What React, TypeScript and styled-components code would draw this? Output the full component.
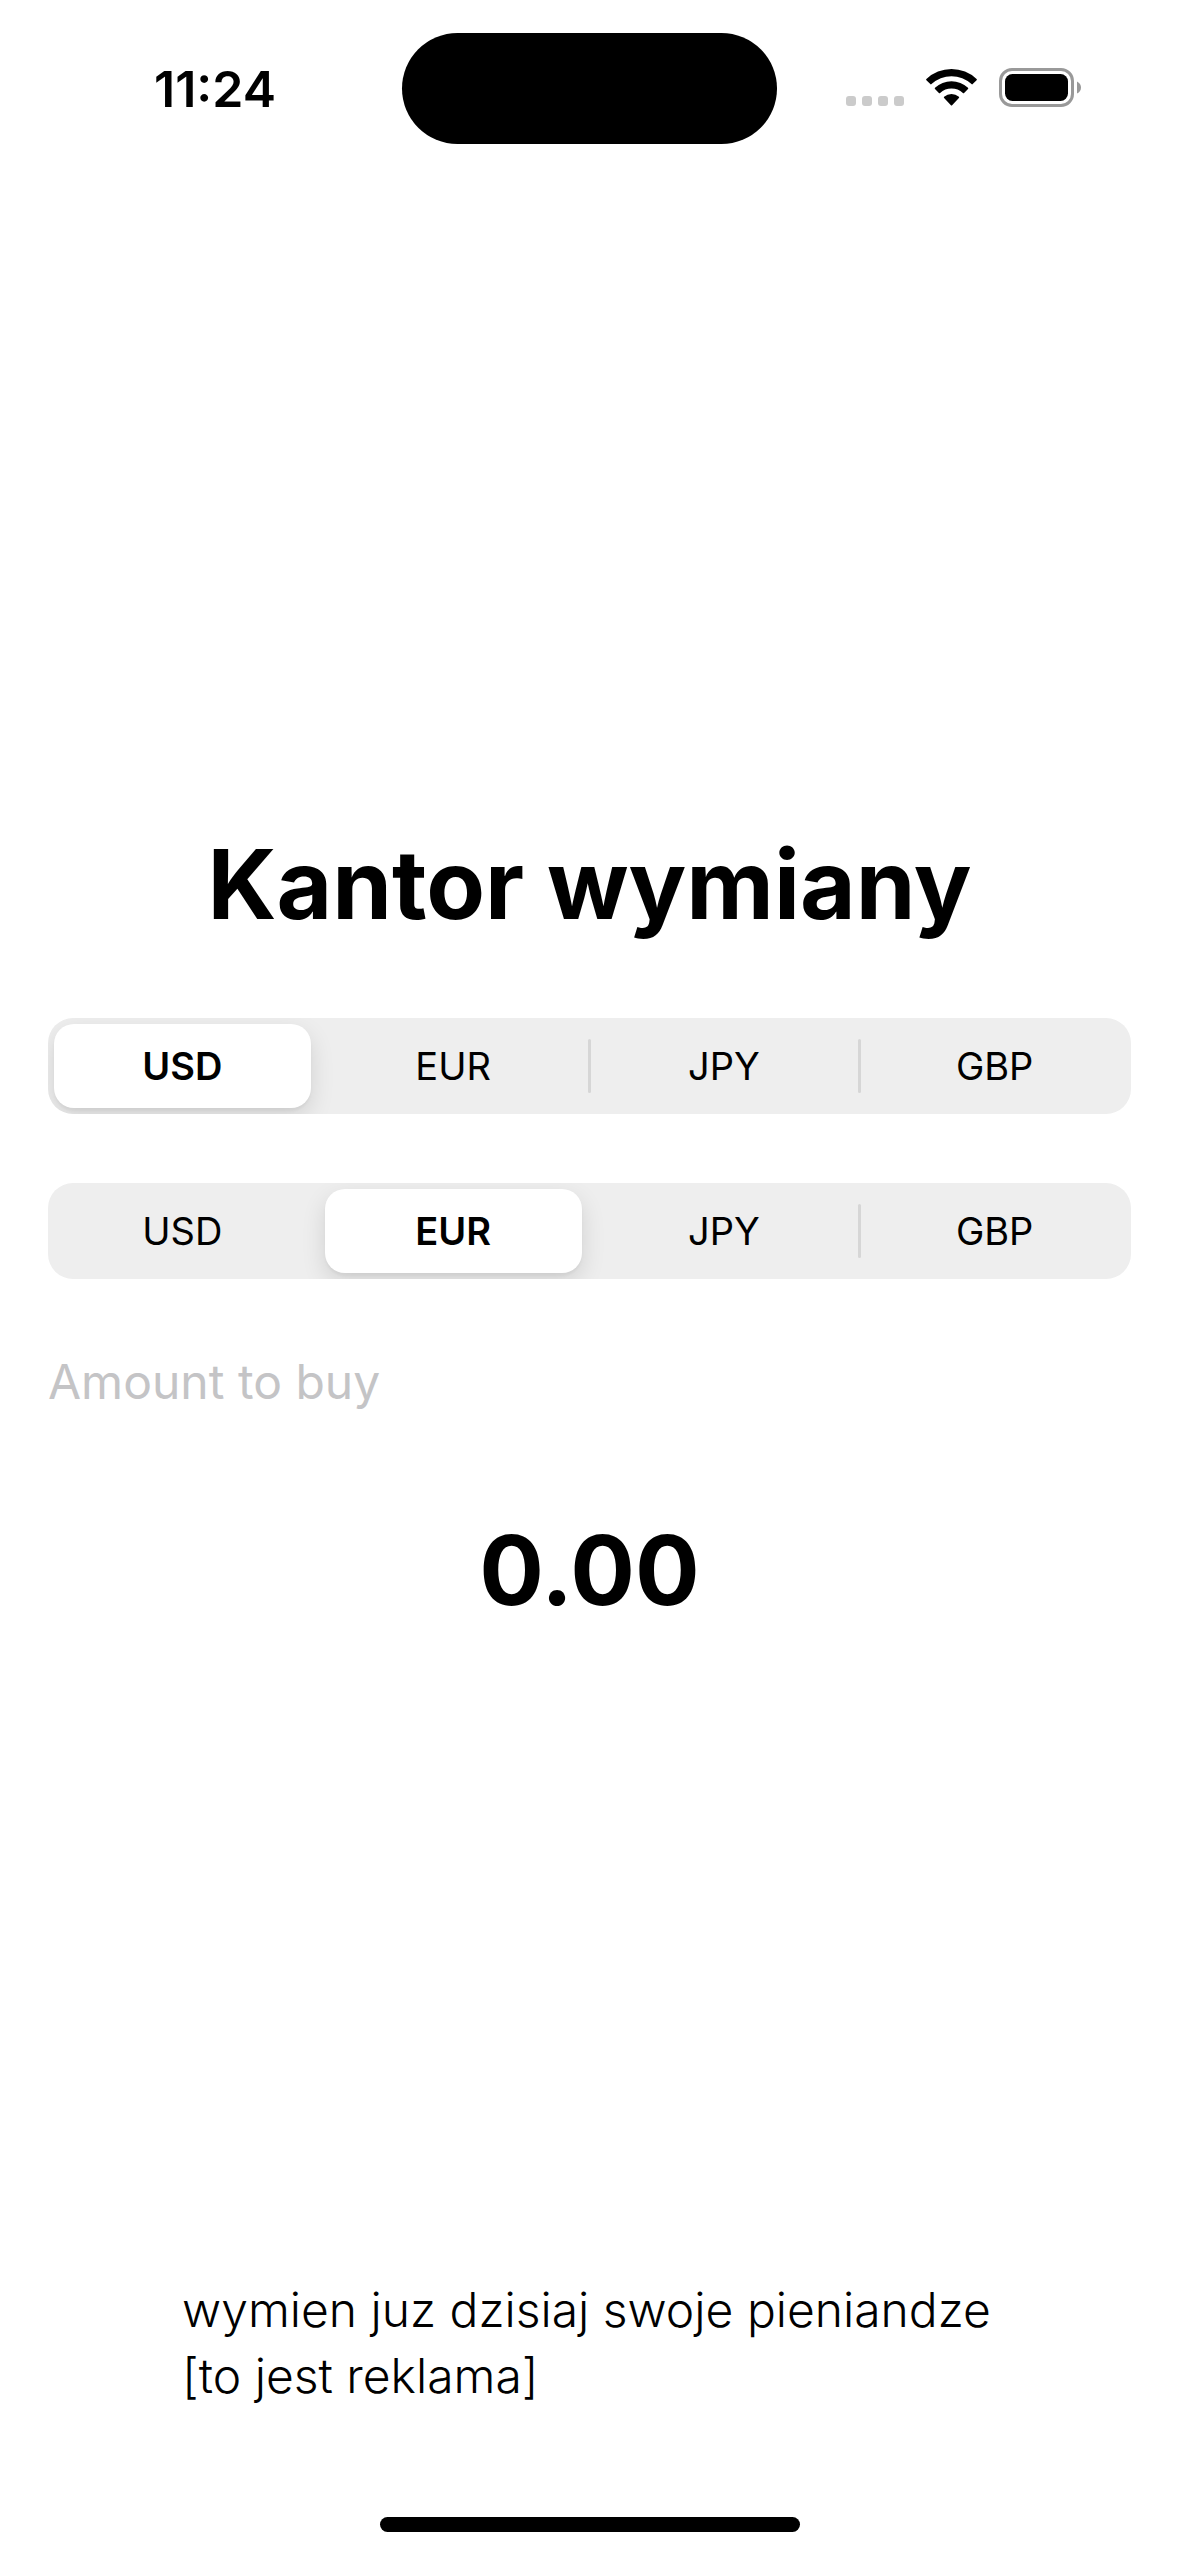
import { useState } from "react";
import styled, { createGlobalStyle } from "styled-components";

const GlobalStyle = createGlobalStyle`
  *, *::before, *::after { box-sizing: border-box; }
  body {
    margin: 0;
    background: #fff;
    color: #000;
    font-family: Inter, "Liberation Sans", sans-serif;
  }
`;

const Screen = styled.div`
  display: flex;
  flex-direction: column;
  min-height: 100vh;
`;

const StatusBar = styled.header`
  display: grid;
  grid-template-columns: 1fr 375px 1fr;
  align-items: center;
  height: 177px;
  padding: 0 28px;
`;

const Time = styled.time`
  font-size: 50px;
  line-height: 60px;
  font-weight: 600;
  text-align: center;
`;

const Island = styled.div`
  height: 111px;
  border-radius: 56px;
  background: #000;
`;

const StatusIcons = styled.svg`
  display: block;
  justify-self: center;
`;

const Exchange = styled.main`
  flex: 1;
  display: flex;
  flex-direction: column;
  justify-content: center;
  gap: 69px;
  padding: 0 48px;
`;

const Title = styled.h1`
  margin: 0;
  font-size: 96px;
  line-height: 129px;
  font-weight: 700;
  text-align: center;
`;

const Result = styled.output`
  display: block;
  font-size: 96px;
  line-height: 129px;
  font-weight: 700;
  text-align: center;
`;

const Segmented = styled.fieldset`
  display: grid;
  grid-template-columns: repeat(4, 1fr);
  height: 96px;
  margin: 0;
  padding: 0;
  border: 0;
  border-radius: 25px;
  background: #eeeeee;
  overflow: hidden;
`;

const Segment = styled.label<{ $divided: boolean }>`
  position: relative;
  display: flex;
  padding: 6px 8px 6px 6px;
  cursor: pointer;

  &::before {
    content: "";
    position: absolute;
    top: 21px;
    bottom: 21px;
    left: -2px;
    width: 3px;
    border-radius: 2px;
    background: ${(p) => (p.$divided ? "#d6d6d6" : "transparent")};
  }
`;

const SegmentInput = styled.input`
  position: absolute;
  inset: 0;
  margin: 0;
  opacity: 0;
  cursor: pointer;
`;

const SegmentFace = styled.span<{ $selected: boolean }>`
  flex: 1;
  display: flex;
  align-items: center;
  justify-content: center;
  border-radius: 20px;
  font-size: 38px;
  line-height: 48px;
  font-weight: ${(p) => (p.$selected ? 600 : 400)};
  background: ${(p) => (p.$selected ? "#fff" : "transparent")};
  box-shadow: ${(p) => (p.$selected ? "0 9px 24px rgba(0, 0, 0, 0.12), 0 3px 3px rgba(0, 0, 0, 0.04)" : "none")};
`;

const AmountField = styled.input`
  width: 100%;
  height: 89px;
  padding: 0 0 21px;
  border: 0;
  outline: 0;
  background: transparent;
  color: #000;
  font-family: inherit;
  font-size: 48px;
  line-height: 68px;

  &::placeholder {
    color: #c4c4c6;
    opacity: 1;
  }
`;

const Footer = styled.footer`
  display: flex;
  flex-direction: column;
  align-items: center;
  gap: 108px;
  padding-bottom: 24px;
`;

const Advert = styled.p`
  margin: 0;
  padding-right: 6px;
  font-size: 48px;
  line-height: 66px;
  font-weight: 300;
`;

const HomeIndicator = styled.div`
  width: 420px;
  height: 15px;
  border-radius: 8px;
  background: #000;
`;

const currencies = ["USD", "EUR", "JPY", "GBP"];

type PickerProps = {
  name: string;
  label: string;
  value: number;
  onChange: (index: number) => void;
};

function CurrencyPicker({ name, label, value, onChange }: PickerProps) {
  return (
    <Segmented aria-label={label}>
      {currencies.map((code, i) => {
        const selected = i === value;
        const divided = i > 0 && !selected && i - 1 !== value;
        return (
          <Segment key={code} $divided={divided}>
            <SegmentInput type="radio" name={name} checked={selected} onChange={() => onChange(i)} />
            <SegmentFace $selected={selected}>{code}</SegmentFace>
          </Segment>
        );
      })}
    </Segmented>
  );
}

function DeviceStatus() {
  return (
    <StatusIcons width="236" height="41" viewBox="0 0 236 41" aria-hidden="true">
      <g fill="#cbcbcb">
        <rect x="0" y="28" width="10" height="10" rx="3" />
        <rect x="16" y="28" width="10" height="10" rx="3" />
        <rect x="32" y="28" width="10" height="10" rx="3" />
        <rect x="48" y="28" width="10" height="10" rx="3" />
      </g>
      <path d="M80.4 11a36.500 36.500 0 0 1 50.200 0q.6.600 0 1.200l-3.900 3.900q-.6.600-1.200 0a29.200 29.200 0 0 0-40 0q-.6.600-1.200 0l-3.900-3.900q-.6-.6 0-1.200z" />
      <path d="M89 19.800a24 24 0 0 1 33 0q.6.600 0 1.200l-3.900 3.900q-.6.600-1.200 0a16.800 16.800 0 0 0-22.800 0q-.6.600-1.200 0l-3.900-3.900q-.6-.6 0-1.200z" />
      <path d="M98.100 28.700a11.400 11.400 0 0 1 14.800 0q.6.600 0 1.200l-6.800 7.300q-.6.600-1.200 0l-6.800-7.300q-.6-.6 0-1.200z" />
      <rect x="154.500" y="1.500" width="72" height="36" rx="11.500" fill="none" stroke="#999" strokeWidth="3" />
      <rect x="159" y="6" width="63" height="27" rx="7.500" />
      <path d="M231 13.500q4 2 4 6t-4 6z" fill="#999" />
    </StatusIcons>
  );
}

export default function App() {
  const [from, setFrom] = useState(0);
  const [to, setTo] = useState(1);
  const [amount, setAmount] = useState("");
  const perDollar = [1, 0.92, 150, 0.79];
  const result = ((Number(amount) || 0) * perDollar[to]) / perDollar[from];

  return (
    <>
      <GlobalStyle />
      <Screen>
        <StatusBar>
          <Time>11:24</Time>
          <Island />
          <DeviceStatus />
        </StatusBar>
        <Exchange>
          <Title>Kantor wymiany</Title>
          <CurrencyPicker name="from" label="From" value={from} onChange={setFrom} />
          <CurrencyPicker name="to" label="To" value={to} onChange={setTo} />
          <AmountField
            aria-label="Amount to buy"
            placeholder="Amount to buy"
            inputMode="decimal"
            value={amount}
            onChange={(e) => setAmount(e.target.value)}
          />
          <Result>{result.toFixed(2)}</Result>
        </Exchange>
        <Footer>
          <Advert>
            wymien juz dzisiaj swoje pieniandze
            <br />
            [to jest reklama]
          </Advert>
          <HomeIndicator />
        </Footer>
      </Screen>
    </>
  );
}
